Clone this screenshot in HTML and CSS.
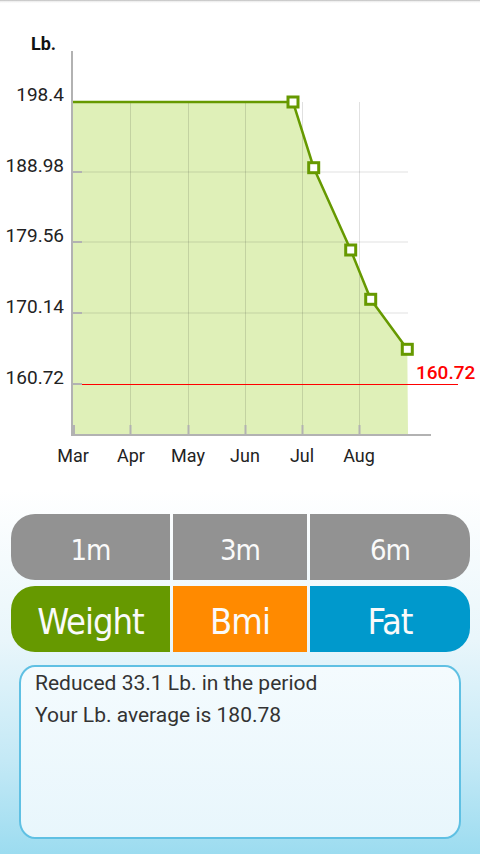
FILE: index.html
```html
<!DOCTYPE html>
<html lang="en">
<head>
    <meta charset="UTF-8">
    <meta name="viewport" content="width=device-width, initial-scale=1.0">
    <title>Weight History</title>
    <link rel="stylesheet" href="styles.css">
</head>
<body>
    <div class="top-shadow"></div>

    <div class="chart">
        <svg width="480" height="478" viewBox="0 3 480 478">
            <!-- area under the weight line -->
            <polygon class="area" points="73,102 293,102 313.7,167.7 350.7,250 370.7,299.3 407.3,349.3 408,435 73,435"/>

            <!-- grid -->
            <g class="grid">
                <line x1="73" y1="172" x2="408" y2="172"/>
                <line x1="73" y1="242" x2="408" y2="242"/>
                <line x1="73" y1="313" x2="408" y2="313"/>
                <line x1="130.5" y1="102" x2="130.5" y2="435"/>
                <line x1="188.5" y1="102" x2="188.5" y2="435"/>
                <line x1="245.5" y1="102" x2="245.5" y2="435"/>
                <line x1="302.5" y1="102" x2="302.5" y2="435"/>
                <line x1="359.5" y1="102" x2="359.5" y2="435"/>
            </g>

            <!-- goal line -->
            <line class="goal" x1="73" y1="384.5" x2="458" y2="384.5"/>
            <text class="goal-label" x="416" y="379">160.72</text>

            <!-- axes -->
            <g class="axis">
                <line x1="72" y1="51" x2="72" y2="436"/>
                <line x1="71" y1="435" x2="431" y2="435"/>
                <line x1="73" y1="102" x2="82" y2="102"/>
                <line x1="73" y1="172" x2="82" y2="172"/>
                <line x1="73" y1="242" x2="82" y2="242"/>
                <line x1="73" y1="313" x2="82" y2="313"/>
                <line x1="73" y1="384" x2="82" y2="384"/>
                <line x1="74" y1="425" x2="74" y2="435"/>
                <line x1="130.5" y1="425" x2="130.5" y2="435"/>
                <line x1="188.5" y1="425" x2="188.5" y2="435"/>
                <line x1="245.5" y1="425" x2="245.5" y2="435"/>
                <line x1="302.5" y1="425" x2="302.5" y2="435"/>
                <line x1="359.5" y1="425" x2="359.5" y2="435"/>
            </g>

            <!-- weight line -->
            <polyline class="series" points="73,102 293,102 313.7,167.7 350.7,250 370.7,299.3 407.3,349.3"/>
            <g class="marker">
                <rect x="288" y="97" width="10" height="10"/>
                <rect x="308.7" y="162.7" width="10" height="10"/>
                <rect x="345.7" y="245" width="10" height="10"/>
                <rect x="365.7" y="294.3" width="10" height="10"/>
                <rect x="402.3" y="344.3" width="10" height="10"/>
            </g>

            <!-- labels -->
            <text class="unit" x="31" y="50">Lb.</text>
            <g class="y-labels">
                <text x="64" y="101">198.4</text>
                <text x="64" y="172">188.98</text>
                <text x="64" y="242">179.56</text>
                <text x="64" y="313">170.14</text>
                <text x="64" y="384">160.72</text>
            </g>
            <g class="x-labels">
                <text x="73" y="462">Mar</text>
                <text x="131" y="462">Apr</text>
                <text x="188" y="462">May</text>
                <text x="245" y="462">Jun</text>
                <text x="302" y="462">Jul</text>
                <text x="359" y="462">Aug</text>
            </g>
        </svg>
    </div>

    <div class="buttons">
        <div class="btn-row">
            <div class="btn period first">1m</div>
            <div class="btn period">3m</div>
            <div class="btn period last">6m</div>
        </div>
        <div class="btn-row">
            <div class="btn weight first">Weight</div>
            <div class="btn bmi">Bmi</div>
            <div class="btn fat last">Fat</div>
        </div>
    </div>

    <div class="summary">
        <p>Reduced 33.1 Lb. in the period</p>
        <p>Your Lb. average is 180.78</p>
    </div>
</body>
</html>
```

FILE: styles.css
```css
body {
    margin: 0;
    height: 854px;
    overflow: hidden;
    font-family: Roboto, "Noto Sans", sans-serif;
    background: linear-gradient(to bottom, #fff 0, #fff 490px, #e9f6fb 640px, #c4e9f6 760px, #9cdcf0 854px);
}

.top-shadow {
    height: 3px;
    background: linear-gradient(to bottom, #b5b5b5, #ececec 40%, #fff);
}

.chart svg {
    display: block;
}

.area {
    fill: #dff0b8;
}

.grid line {
    stroke: rgba(0, 0, 0, 0.12);
    stroke-width: 1;
}

.goal {
    stroke: #f00;
    stroke-width: 1;
}

.goal-label {
    fill: #f00;
    font-size: 19px;
    font-weight: 500;
}

.axis line {
    stroke: #b2b2b2;
    stroke-width: 2;
}

.series {
    fill: none;
    stroke: #669900;
    stroke-width: 2.5;
}

.marker rect {
    fill: #fff;
    stroke: #669900;
    stroke-width: 3;
}

.unit {
    font-size: 18px;
    font-weight: bold;
    fill: #111;
}

.y-labels text {
    font-size: 19px;
    fill: #222;
    text-anchor: end;
}

.x-labels text {
    font-size: 18px;
    fill: #222;
    text-anchor: middle;
}

.buttons {
    margin: 33px 10px 0 11px;
    display: flex;
    flex-direction: column;
    gap: 6px;
}

.btn-row {
    display: grid;
    grid-template-columns: 159px 134px 1fr;
    gap: 3px;
    height: 66px;
}

.btn {
    display: flex;
    align-items: center;
    justify-content: center;
    color: #fafafa;
    font-family: "DejaVu Sans", sans-serif;
    font-stretch: condensed;
    letter-spacing: -1px;
}

.btn.first {
    border-radius: 24px 0 0 24px;
}

.btn.last {
    border-radius: 0 24px 24px 0;
}

.period {
    background-color: #929292;
    font-size: 29px;
    padding-top: 6px;
}

.weight,
.bmi,
.fat {
    font-size: 36px;
    padding-top: 4px;
}

.weight {
    background-color: #669900;
}

.bmi {
    background-color: #ff8a00;
}

.fat {
    background-color: #0099cc;
}

.summary {
    margin: 13px 19px 0 19px;
    height: 170px;
    border: 2px solid #5fc0e3;
    border-radius: 16px / 18px;
    background: linear-gradient(to bottom, #f4fbfe, #e8f6fc);
    padding: 0 14px;
}

.summary p {
    margin: 0;
    font-size: 21px;
    line-height: 32px;
    color: #333;
}
```
